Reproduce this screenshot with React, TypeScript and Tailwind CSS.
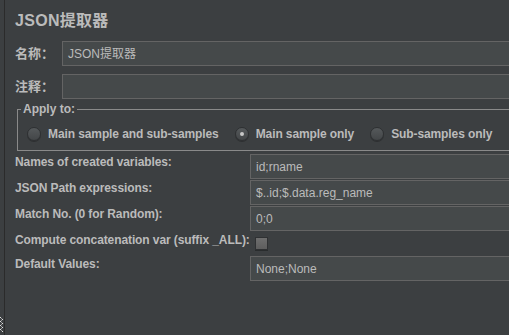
import React from "react";

const font = "font-['Liberation_Sans','Noto_Sans_CJK_SC',sans-serif]";

function Radio({ checked, label }: { checked?: boolean; label: string }) {
  return (
    <div className="flex items-center gap-[7px]">
      <div className="w-[14px] h-[14px] rounded-full border border-[#2e3032] bg-gradient-to-b from-[#55595b] to-[#434648] flex items-center justify-center shadow-[0_1px_0_rgba(0,0,0,0.25)]">
        {checked && <div className="w-[4px] h-[4px] rounded-full bg-[#c8c8c8]" />}
      </div>
      <span className="text-[12px] font-bold leading-[14px] text-[#bbbbbb] tracking-[-0.1px]">{label}</span>
    </div>
  );
}

function Field({ value, h = "h-[25px]" }: { value?: string; h?: string }) {
  return (
    <div className={`flex-1 ${h} border border-[#646464] bg-[#45494a] flex items-center pl-[5px] text-[12px] text-[#bbbbbb] leading-[14px]`}>
      {value}
    </div>
  );
}

function Row({ label, children }: { label: string; children: React.ReactNode }) {
  return (
    <div className="flex items-start">
      <div className="w-[235px] shrink-0 pt-[1px] text-[12px] font-bold leading-[14px] text-[#bbbbbb] whitespace-nowrap tracking-[-0.1px]">
        {label}
      </div>
      {children}
    </div>
  );
}

export default function App() {
  return (
    <div className={`w-[509px] h-[335px] bg-[#3c3f41] flex overflow-hidden ${font}`}>
      <div className="w-[4px] shrink-0 relative">
        <svg className="absolute left-0 top-[317px]" width="3" height="15" viewBox="0 0 3 15">
          {[0, 2, 4, 6, 8, 10, 12, 14].map((y) => (
            <rect key={y} x={y % 4 === 0 ? 0 : 2} y={y} width="1" height="1" fill="#e0e0e0" />
          ))}
          {[1, 3, 5, 7, 9, 11, 13].map((y) => (
            <rect key={y} x={1} y={y} width="1" height="1" fill="#9a9a9a" />
          ))}
        </svg>
      </div>
      <div className="w-px shrink-0 bg-[#2b2b2b]" />
      <div className="w-[540px] shrink-0 pl-[10px] pt-[11px] flex flex-col">
        <div className="text-[16px] font-bold leading-[20px] text-[#bbbbbb] h-[20px] tracking-[0.3px]">JSON提取器</div>
        <div className="flex items-center mt-[10px]">
          <div className="w-[47px] shrink-0 text-[13px] font-bold text-[#bbbbbb] leading-[16px]">名称：</div>
          <Field value="JSON提取器" h="h-[25px]" />
        </div>
        <div className="flex items-center mt-[8px]">
          <div className="w-[47px] shrink-0 text-[13px] font-bold text-[#bbbbbb] leading-[16px]">注释：</div>
          <Field h="h-[25px]" />
        </div>
        <fieldset className="ml-[2px] mt-[3px] border border-[#8a8a8a] px-[9px] pt-[9px] pb-[7px] min-w-0">
          <legend className="-ml-[6px] px-[2px] text-[12px] font-bold leading-[14px] text-[#bbbbbb]">Apply to:</legend>
          <div className="flex items-center gap-[16px] h-[18px]">
            <Radio label="Main sample and sub-samples" />
            <Radio checked label="Main sample only" />
            <Radio label="Sub-samples only" />
          </div>
        </fieldset>
        <div className="mt-[3px] flex flex-col gap-[1px]">
          <Row label="Names of created variables:">
            <Field value="id;rname" />
          </Row>
          <Row label="JSON Path expressions:">
            <Field value="$..id;$.data.reg_name" />
          </Row>
          <Row label="Match No. (0 for Random):">
            <Field value="0;0" />
          </Row>
          <Row label="Compute concatenation var (suffix _ALL):">
            <div className="h-[23px] flex items-center pl-[5px]">
              <div className="w-[13px] h-[13px] border border-[#2f3133] bg-gradient-to-b from-[#6e6e6e] to-[#5e5e5e] shadow-[0_1px_0_rgba(0,0,0,0.3)]" />
            </div>
          </Row>
          <Row label="Default Values:">
            <Field value="None;None" />
          </Row>
        </div>
      </div>
    </div>
  );
}
